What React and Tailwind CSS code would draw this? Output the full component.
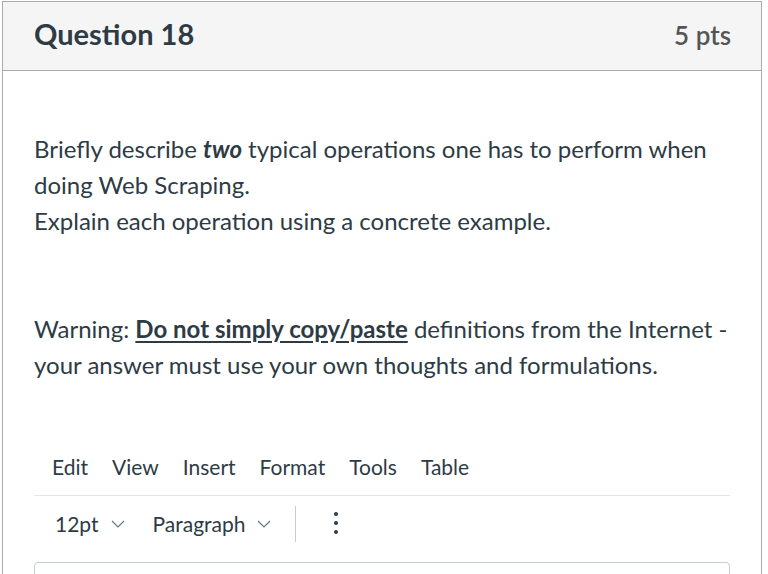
import React from "react";

const font = { fontFamily: "Lato, 'Noto Sans', sans-serif" };

function Chevron() {
  return (
    <svg width="14" height="8" viewBox="0 0 14 8" className="ml-[12px]">
      <path d="M1 1 L7 7 L13 1" fill="none" stroke="#6b7780" strokeWidth="1.2" />
    </svg>
  );
}

export default function App() {
  return (
    <div className="bg-white w-[768px] h-[574px] overflow-hidden pt-[1px] pl-[2px]" style={font}>
      <div className="w-[760px] border border-[#ababab] text-[#2d3b45] h-[600px]">
        <div className="h-[69px] bg-[#f5f5f5] border-b border-[#ababab] flex items-center justify-between pl-[31px] pr-[30px]">
          <div className="text-[29px] font-bold leading-none pb-[6px]">Question 18</div>
          <div className="text-[26px] font-semibold text-[#555] leading-none pb-[3px]">5 pts</div>
        </div>
        <div className="px-[31px] pt-[60px]">
          <div className="text-[24px] leading-[36px]">
            <p>
              Briefly describe <b><i>two</i></b> typical operations one has to perform when doing Web Scraping.
              <br />
              Explain each operation using a concrete example.
            </p>
            <p className="mt-[72px]">
              Warning: <b className="underline underline-offset-[3px]">Do not simply copy/paste</b> definitions from the Internet - your answer must use your own thoughts and formulations.
            </p>
          </div>
          <div className="mt-[57px]">
            <div className="flex items-center gap-[24px] pl-[18px] h-[56px] text-[21px] border-b border-[#e4e6e8] pb-[2px]">
              <span>Edit</span>
              <span>View</span>
              <span>Insert</span>
              <span>Format</span>
              <span>Tools</span>
              <span>Table</span>
            </div>
            <div className="flex items-center h-[58px] text-[21px] pb-[3px]">
              <div className="flex items-center pl-[21px]">
                <span>12pt</span>
                <Chevron />
              </div>
              <div className="flex items-center ml-[28px]">
                <span>Paragraph</span>
                <Chevron />
              </div>
              <div className="ml-[24px] w-[1px] h-[36px] bg-[#c7cdd1]" />
              <div className="ml-[38px] flex flex-col gap-[5px] mb-[1px]">
                <span className="block w-[4px] h-[4px] rounded-full bg-[#2d3b45]" />
                <span className="block w-[4px] h-[4px] rounded-full bg-[#2d3b45]" />
                <span className="block w-[4px] h-[4px] rounded-full bg-[#2d3b45]" />
              </div>
            </div>
            <div className="mt-[8px] h-[60px] border border-[#c7cdd1] rounded-t-[4px]" />
          </div>
        </div>
      </div>
    </div>
  );
}
